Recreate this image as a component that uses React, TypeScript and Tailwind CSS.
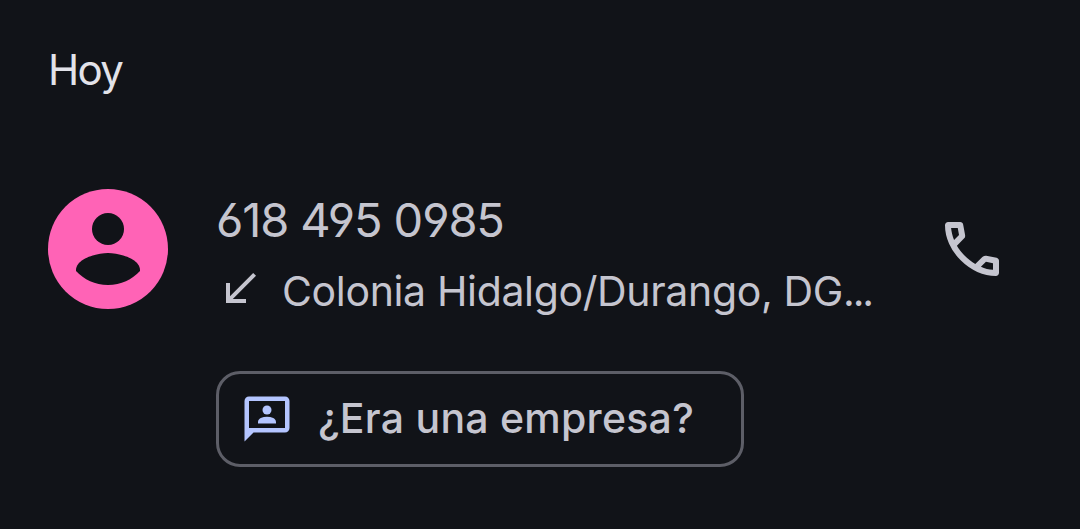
const ContactAvatar = () => (
  <svg className="size-[120px] shrink-0" viewBox="0 0 120 120" aria-hidden="true">
    <circle cx="60" cy="60" r="60" fill="#ff63b6" />
    <circle cx="60" cy="40" r="16" fill="#111318" />
    <path
      d="M28 81c0-11.500 21.400-17 32-17s32 5.500 32 17v1C84 90.500 73 96 60 96S36 90.500 28 82z"
      fill="#111318"
    />
  </svg>
);

const ReceivedIcon = () => (
  <svg className="size-12 shrink-0" viewBox="0 0 24 24" fill="currentColor" aria-hidden="true">
    <path d="M20 5.410 18.590 4 7 15.590V9H5v10h10v-2H8.410z" />
  </svg>
);

const CallIcon = () => (
  <svg className="size-[72px]" viewBox="0 -960 960 960" fill="currentColor" aria-hidden="true">
    <path d="M798-120q-125 0-247-54.500T329-329Q229-429 174.500-551T120-798q0-18 12-30t30-12h162q14 0 25 9.500t13 22.500l26 140q2 16-1 27t-11 19l-97 98q20 37 47.500 71.500T387-386q31 31 65 57.500t72 48.500l94-94q9-9 23.500-13.500T670-390l138 28q14 4 23 14.500t9 23.500v162q0 18-12 30t-30 12ZM241-600l66-66-17-94h-89q5 41 14 81t26 79Zm358 358q39 17 79.500 27t81.500 13v-88l-94-19-67 67Z" />
  </svg>
);

const BusinessIcon = () => (
  <svg className="size-[54px] shrink-0 text-[#b4c5ff]" viewBox="0 0 24 24" fill="currentColor" aria-hidden="true">
    <path d="M20 2H4c-1.100 0-2 .9-2 2v18l4-4h14c1.100 0 2-.9 2-2V4c0-1.100-.9-2-2-2zm0 14H4V4h16z" />
    <circle cx="12" cy="8" r="2" />
    <path d="M16 13.430c0-.81-.48-1.530-1.220-1.850-.85-.37-1.790-.58-2.780-.58s-1.930.21-2.780.58C8.480 11.900 8 12.620 8 13.430V14h8z" />
  </svg>
);

const App = () => {
  return (
    <main className="h-[529px] w-[1080px] overflow-hidden bg-[#111318] px-12 pt-[45px] font-[Inter,sans-serif] text-[#c5c5cf]">
      <h1 className="text-[42px] leading-[50px] tracking-[-1.7px] text-[#e2e2e9]">Hoy</h1>
      <div className="mt-[94px] flex items-start">
        <ContactAvatar />
        <div className="ml-12 flex flex-col items-start whitespace-nowrap">
          <p className="h-[60px] text-[47px] leading-[62px] tracking-[-1.1px] [font-feature-settings:'cv03','cv04']">
            618 495 0985
          </p>
          <div className="mt-4 flex h-12 items-center">
            <ReceivedIcon />
            <p className="mt-1 ml-[18px] text-[41px] leading-[52px] tracking-[-0.35px]">
              Colonia Hidalgo/Durango, DG<span className="tracking-[-2.2px]">...</span>
            </p>
          </div>
          <button className="mt-[58px] flex h-24 w-[528px] items-center rounded-3xl border-[3px] border-[#5d5e67] pl-[21px]">
            <BusinessIcon />
            <span className="-mt-0.5 ml-6 text-[41px] leading-[52px] font-medium tracking-[0.25px]">
              ¿Era una empresa?
            </span>
          </button>
        </div>
        <button className="mt-6 mr-6 ml-auto" aria-label="Llamar">
          <CallIcon />
        </button>
      </div>
    </main>
  );
};

export default App;
